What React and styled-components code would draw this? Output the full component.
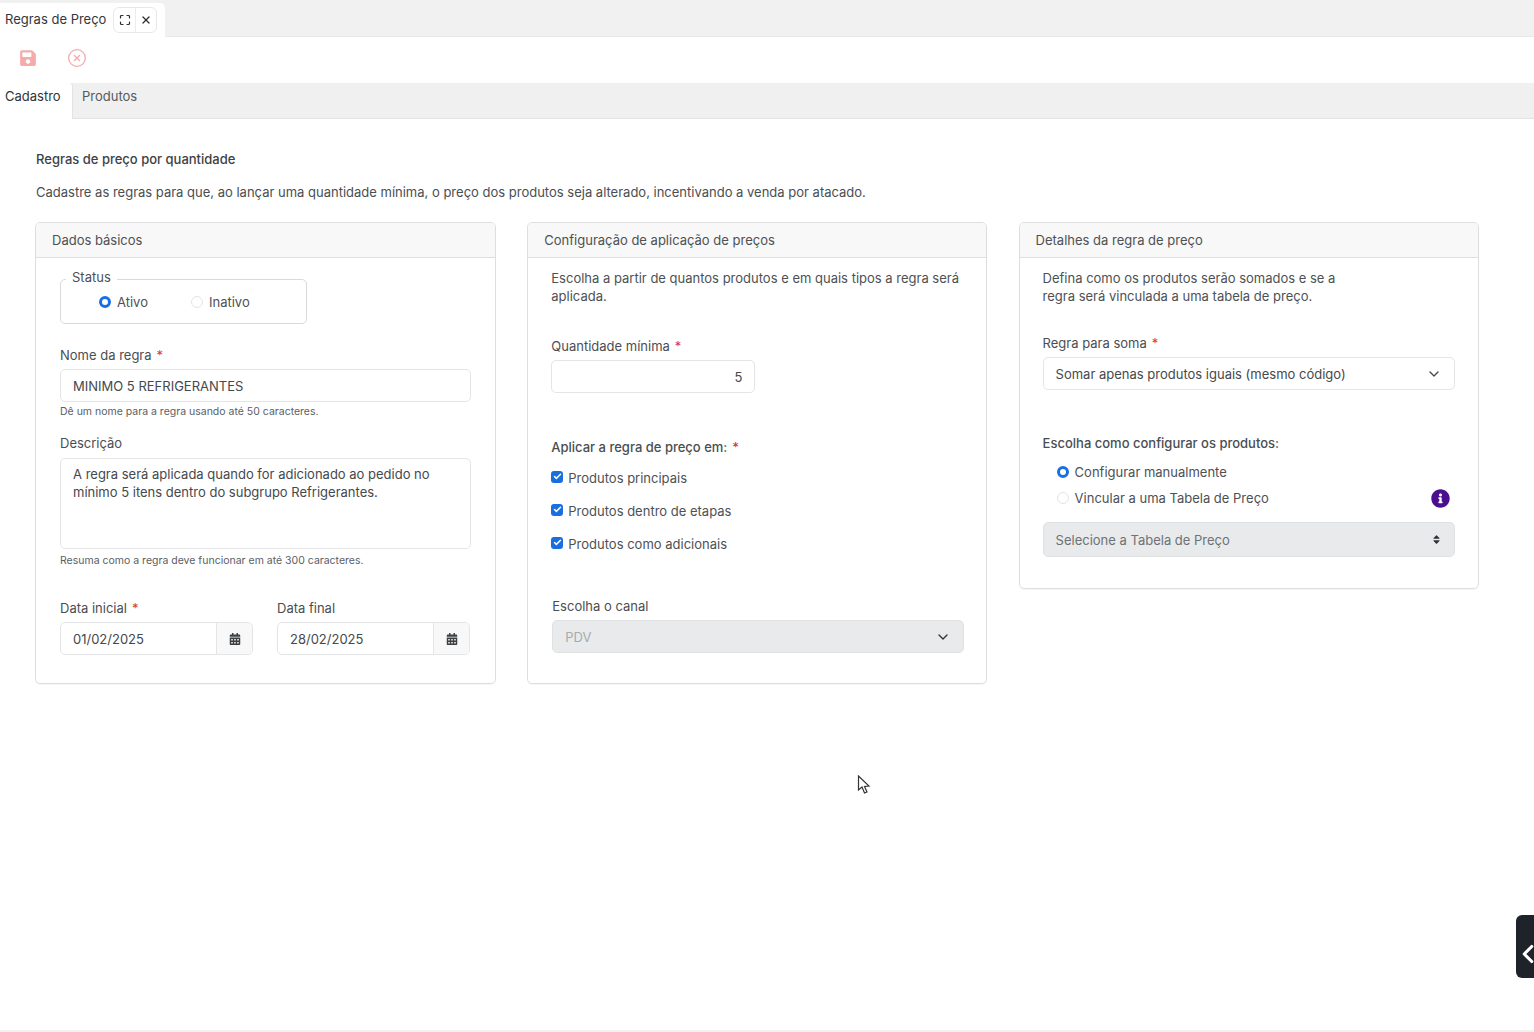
import React from "react";
import styled, { createGlobalStyle } from "styled-components";
import { Maximize, X, CircleX, ChevronDown, ChevronLeft, Check } from "lucide-react";
import { FaSave, FaCalendarAlt, FaInfoCircle, FaSort } from "react-icons/fa";

const GlobalStyle = createGlobalStyle`
  * { box-sizing: border-box; }
  html, body { margin: 0; padding: 0; background: #fff; }
  body {
    font-family: Inter, "Open Sans", "Liberation Sans", sans-serif;
    font-size: 13px;
    color: #44494d;
  }
`;

const Page = styled.div`
  position: relative;
  height: 1032px;
  overflow: hidden;
  display: flex;
  flex-direction: column;
  background: #fff;
`;

const WindowBar = styled.div`
  height: 37px;
  flex: none;
  background: #f1f1f1;
  border-bottom: 1px solid #e9e9e9;
  padding-top: 3px;
  display: flex;
`;

const WindowTab = styled.div`
  width: 165px;
  height: 34px;
  background: #fff;
  border-top-right-radius: 5px;
  display: flex;
  align-items: center;
  padding-left: 5px;
  color: #33373a;
  font-size: 13px;
`;

const WindowTabTitle = styled.span`
  width: 108px;
  margin-top: -2px;
`;

const WindowButtons = styled.div`
  display: flex;
  height: 26px;
  border: 1px solid #e8e8e8;
  border-radius: 6px;
`;

const WindowButton = styled.div`
  width: 21px;
  display: flex;
  align-items: center;
  justify-content: center;
  color: #2b2f32;
  & + & { border-left: 1px solid #ececec; }
`;

const Toolbar = styled.div`
  height: 46px;
  flex: none;
  display: flex;
  align-items: center;
  padding: 0 0 4px 19px;
  gap: 30px;
  color: #f6abab;
`;

const SubTabs = styled.div`
  height: 36px;
  flex: none;
  background: #f0f0f0;
  border-bottom: 1px solid #e3e3e3;
  display: flex;
`;

const SubTab = styled.div`
  height: ${(p) => (p.$active ? "36px" : "auto")};
  padding: 5px 9px 0 5px;
  width: ${(p) => (p.$active ? "73px" : "auto")};
  background: ${(p) => (p.$active ? "#fff" : "transparent")};
  color: ${(p) => (p.$active ? "#2f3336" : "#55595d")};
  border-right: ${(p) => (p.$active ? "1px solid #e3e3e3" : "none")};
  border-top-right-radius: 4px;
  ${(p) => !p.$active && "margin-left: 4px;"}
  font-size: 13px;
  line-height: 17px;
`;

const Content = styled.main`
  flex: 1;
  padding: 30px 55px 0 35px;
`;

const Heading = styled.h1`
  margin: 0 0 0 1px;
  font-size: 13px;
  line-height: 20px;
  font-weight: 500;
  color: #3d4144;
`;

const Lead = styled.p`
  margin: 13px 0 20px 1px;
  font-size: 13px;
  line-height: 20px;
  color: #4a4e52;
`;

const Cards = styled.div`
  display: grid;
  grid-template-columns: 461px 460px 460px;
  column-gap: 31.3px;
  align-items: start;
`;

const Card = styled.section`
  height: ${(p) => p.$height}px;
  border: 1px solid #dcdee0;
  border-radius: 5px;
  box-shadow: 0 1px 1px rgba(0, 0, 0, 0.04);
  overflow: hidden;
`;

const CardHeader = styled.header`
  height: 35px;
  background: #f8f8f8;
  border-bottom: 1px solid #dcdee0;
  padding: 0 16px;
  display: flex;
  align-items: center;
  color: #4d5154;
`;

const CardBody = styled.div`
  padding: ${(p) => p.$pad || "0 24px"};
`;

const StatusBox = styled.div`
  position: relative;
  margin-top: 21px;
  width: 247px;
  height: 45px;
  border: 1px solid #d8dadc;
  border-radius: 5px;
  display: flex;
  align-items: center;
  padding-left: 38px;
  gap: 43px;
`;

const StatusLegend = styled.span`
  position: absolute;
  top: -13px;
  left: 5px;
  padding: 0 6px;
  background: #fff;
  line-height: 20px;
  color: #4d5154;
`;

const Radio = styled.span`
  flex: none;
  width: 12px;
  height: 12px;
  border-radius: 50%;
  background: #fff;
  border: ${(p) => (p.$on ? "3.5px solid #1a6fe0" : "1px solid #e2e4e6")};
`;

const RadioRow = styled.div`
  display: flex;
  align-items: center;
  gap: 6px;
  line-height: 20px;
  color: #4d5154;
  padding-left: ${(p) => p.$indent || 0}px;
`;

const Label = styled.div`
  margin-top: ${(p) => p.$top || 0}px;
  margin-left: ${(p) => p.$left || 0}px;
  margin-bottom: ${(p) => p.$bottom ?? 4}px;
  line-height: 20px;
  font-weight: ${(p) => (p.$bold ? 500 : 400)};
  color: #4a4e52;
`;

const Req = styled.span`
  color: #d9363e;
  margin-left: 5px;
`;

const Field = styled.div`
  height: ${(p) => p.$height || 33}px;
  width: ${(p) => (p.$width ? `${p.$width}px` : "auto")};
  margin-left: ${(p) => p.$left || 0}px;
  margin-top: ${(p) => p.$top || 0}px;
  border: 1px solid #e3e5e7;
  border-radius: 5px;
  padding: 0 12px;
  display: flex;
  align-items: center;
  justify-content: ${(p) => (p.$end ? "flex-end" : "space-between")};
  color: #44494d;
`;

const DisabledField = styled(Field)`
  background: #e9eaeb;
  color: ${(p) => p.$text || "#a6abaf"};
  border-color: #e0e1e2;
  svg { color: #2f3336; }
`;

const TextArea = styled.div`
  height: 91px;
  margin-top: 5px;
  border: 1px solid #e3e5e7;
  border-radius: 5px;
  padding: 6px 12px;
  line-height: 18px;
  color: #44494d;
`;

const Help = styled.div`
  margin-top: ${(p) => p.$top || 3}px;
  font-size: 10.5px;
  line-height: 14px;
  color: #5c6064;
`;

const DateRow = styled.div`
  display: grid;
  grid-template-columns: 193px 193px;
  column-gap: 24px;
  margin-top: 30px;
`;

const DateInput = styled.div`
  display: flex;
  height: 33px;
  border: 1px solid #e3e5e7;
  border-radius: 5px;
  overflow: hidden;
`;

const DateValue = styled.div`
  flex: 1;
  padding-left: 12px;
  display: flex;
  align-items: center;
`;

const DateAddon = styled.div`
  width: 36px;
  background: #f8f8f8;
  border-left: 1px solid #e3e5e7;
  display: flex;
  align-items: center;
  justify-content: center;
  color: #3c4043;
`;

const Intro = styled.p`
  margin: 11px 0 0;
  line-height: 18px;
  color: #4d5154;
`;

const CheckRow = styled.div`
  display: flex;
  align-items: center;
  gap: 5px;
  height: 33px;
  color: #4d5154;
`;

const CheckBox = styled.span`
  width: 12px;
  height: 12px;
  margin-top: -2px;
  border-radius: 3px;
  background: #1a6fe0;
  color: #fff;
  display: flex;
  align-items: center;
  justify-content: center;
`;

const InfoLine = styled.div`
  display: flex;
  align-items: center;
  justify-content: space-between;
  margin-top: 6px;
  padding-right: 5px;
`;

const Handle = styled.div`
  position: absolute;
  right: 0;
  top: 915px;
  width: 18px;
  height: 63px;
  background: #1d2329;
  border-radius: 6px 0 0 6px;
  display: flex;
  align-items: center;
  color: #fff;
  overflow: hidden;
  svg {
    flex: none;
    margin: 15px 0 0 -3px;
  }
`;

const Cursor = styled.svg`
  position: absolute;
  left: 857px;
  top: 775px;
`;

const FooterLine = styled.div`
  height: 2px;
  flex: none;
  background: #f1f1f1;
`;

export default function App() {
  return (
    <Page>
      <GlobalStyle />
      <WindowBar>
        <WindowTab>
          <WindowTabTitle>Regras de Preço</WindowTabTitle>
          <WindowButtons>
            <WindowButton><Maximize size={12} strokeWidth={2.4} /></WindowButton>
            <WindowButton><X size={12} strokeWidth={2.6} /></WindowButton>
          </WindowButtons>
        </WindowTab>
      </WindowBar>
      <Toolbar>
        <FaSave size={18} />
        <CircleX size={20} strokeWidth={1.6} />
      </Toolbar>
      <SubTabs>
        <SubTab $active>Cadastro</SubTab>
        <SubTab>Produtos</SubTab>
      </SubTabs>
      <Content>
        <Heading>Regras de preço por quantidade</Heading>
        <Lead>
          Cadastre as regras para que, ao lançar uma quantidade mínima, o preço dos produtos seja alterado, incentivando a venda por atacado.
        </Lead>
        <Cards>
          <Card $height={462}>
            <CardHeader>Dados básicos</CardHeader>
            <CardBody>
              <StatusBox>
                <StatusLegend>Status</StatusLegend>
                <RadioRow><Radio $on />Ativo</RadioRow>
                <RadioRow><Radio />Inativo</RadioRow>
              </StatusBox>
              <Label $top={21}>Nome da regra<Req>*</Req></Label>
              <Field>MINIMO 5 REFRIGERANTES</Field>
              <Help>Dê um nome para a regra usando até 50 caracteres.</Help>
              <Label $top={14} $bottom={0}>Descrição</Label>
              <TextArea>
                A regra será aplicada quando for adicionado ao pedido no mínimo 5 itens dentro do subgrupo Refrigerantes.
              </TextArea>
              <Help $top={5}>Resuma como a regra deve funcionar em até 300 caracteres.</Help>
              <DateRow>
                <div>
                  <Label>Data inicial<Req>*</Req></Label>
                  <DateInput>
                    <DateValue>01/02/2025</DateValue>
                    <DateAddon><FaCalendarAlt size={12} /></DateAddon>
                  </DateInput>
                </div>
                <div>
                  <Label>Data final</Label>
                  <DateInput>
                    <DateValue>28/02/2025</DateValue>
                    <DateAddon><FaCalendarAlt size={12} /></DateAddon>
                  </DateInput>
                </div>
              </DateRow>
            </CardBody>
          </Card>

          <Card $height={462}>
            <CardHeader>Configuração de aplicação de preços</CardHeader>
            <CardBody $pad="0 22px 0 23px">
              <Intro>Escolha a partir de quantos produtos e em quais tipos a regra será aplicada.</Intro>
              <Label $top={31}>Quantidade mínima<Req>*</Req></Label>
              <Field $width={204} $end>5</Field>
              <Label $top={44} $bold>Aplicar a regra de preço em:<Req>*</Req></Label>
              <CheckRow><CheckBox><Check size={9} strokeWidth={4} /></CheckBox>Produtos principais</CheckRow>
              <CheckRow><CheckBox><Check size={9} strokeWidth={4} /></CheckBox>Produtos dentro de etapas</CheckRow>
              <CheckRow><CheckBox><Check size={9} strokeWidth={4} /></CheckBox>Produtos como adicionais</CheckRow>
              <Label $top={36} $left={1}>Escolha o canal</Label>
              <DisabledField $left={1}>PDV<ChevronDown size={16} /></DisabledField>
            </CardBody>
          </Card>

          <Card $height={367}>
            <CardHeader>Detalhes da regra de preço</CardHeader>
            <CardBody $pad="0 23px">
              <Intro>Defina como os produtos serão somados e se a<br />regra será vinculada a uma tabela de preço.</Intro>
              <Label $top={28}>Regra para soma<Req>*</Req></Label>
              <Field>Somar apenas produtos iguais (mesmo código)<ChevronDown size={16} /></Field>
              <Label $top={43} $bold $bottom={9}>Escolha como configurar os produtos:</Label>
              <RadioRow $indent={14}><Radio $on />Configurar manualmente</RadioRow>
              <InfoLine>
                <RadioRow $indent={14}><Radio />Vincular a uma Tabela de Preço</RadioRow>
                <FaInfoCircle size={19} color="#4b0e8f" />
              </InfoLine>
              <DisabledField $height={35} $text="#6d7276" $top={14}>
                Selecione a Tabela de Preço<FaSort size={11} />
              </DisabledField>
            </CardBody>
          </Card>
        </Cards>
      </Content>
      <FooterLine />
      <Handle><ChevronLeft size={30} strokeWidth={2.5} /></Handle>
      <Cursor width="14" height="20" viewBox="0 0 14 20">
        <path d="M1.5 1v14l3.5-3 2.5 6 2.5-1-2.5-5.500 4.500-.5z" fill="#fff" stroke="#333" strokeWidth="1.2" />
      </Cursor>
    </Page>
  );
}
